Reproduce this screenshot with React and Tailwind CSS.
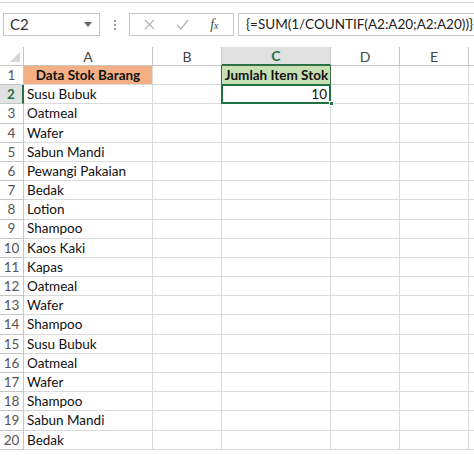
import React from 'react'

const items = [
  'Susu Bubuk', 'Oatmeal', 'Wafer', 'Sabun Mandi', 'Pewangi Pakaian', 'Bedak', 'Lotion',
  'Shampoo', 'Kaos Kaki', 'Kapas', 'Oatmeal', 'Wafer', 'Shampoo', 'Susu Bubuk',
  'Oatmeal', 'Wafer', 'Shampoo', 'Sabun Mandi', 'Bedak'
]

const font = { fontFamily: 'Lato, "Noto Sans", sans-serif' }

const Cell = ({ w, className = '', children }) => (
  <div className={`${w} shrink-0 h-full border-r border-b border-[#dadada] flex items-center whitespace-nowrap ${className}`}>
    {children}
  </div>
)

const RowHead = ({ n, active }) => (
  <div
    className={`w-[24px] shrink-0 h-full flex items-center justify-center text-[13.5px] border-b ${
      active
        ? 'bg-[#e1e1e1] text-[#217346] font-bold border-r-2 border-r-[#217346] border-b-[#c6c6c6]'
        : 'text-[#555] border-r border-[#c6c6c6]'
    }`}
  >
    {n}
  </div>
)

export default function App() {
  return (
    <div className="w-[474px] h-[455px] bg-white overflow-hidden text-[#111]" style={font}>
      {/* formula bar */}
      <div className="border-t border-[#d4d4d4] mt-[2px] h-[45px] flex items-start pt-[10px] pl-[3px]">
        <div className="w-[97px] shrink-0 h-[23px] border border-[#c6c6c6] flex items-center justify-between pl-[6px] pr-[7px] text-[15px] text-[#333]">
          <span>C2</span>
          <svg width="8" height="5" viewBox="0 0 8 5"><path d="M0 0h8L4 5z" fill="#666" /></svg>
        </div>
        <div className="w-[29px] shrink-0 h-[23px] flex flex-col items-center justify-center gap-[2px]">
          <span className="w-[2px] h-[2px] bg-[#999]" />
          <span className="w-[2px] h-[2px] bg-[#999]" />
          <span className="w-[2px] h-[2px] bg-[#999]" />
        </div>
        <div className="w-[105px] shrink-0 h-[23px] border border-[#c6c6c6] flex items-center justify-around px-[4px]">
          <svg width="11" height="11" viewBox="0 0 11 11"><path d="M1 1l9 9M10 1l-9 9" stroke="#b5b5b5" strokeWidth="1.3" /></svg>
          <svg width="13" height="11" viewBox="0 0 13 11"><path d="M1 6l4 4 7-9" stroke="#b5b5b5" strokeWidth="1.3" fill="none" /></svg>
          <span className="italic text-[14px] text-[#444]" style={{ fontFamily: '"Liberation Serif", serif' }}>f<span className="text-[10px]">x</span></span>
        </div>
        <div className="ml-[4px] flex-1 min-w-0 overflow-hidden h-[23px] border border-[#c6c6c6] border-r-0 flex items-center pl-[7px] text-[13.5px] text-[#222] whitespace-nowrap">
          {'{=SUM(1/COUNTIF(A2:A20;A2:A20))}'}
        </div>
      </div>

      {/* column headers */}
      <div className="flex h-[19px] text-[14px] text-[#444]">
        <div className="w-[24px] shrink-0 h-full border-r border-b border-[#c6c6c6] relative">
          <svg className="absolute right-[3px] bottom-[3px]" width="10" height="10" viewBox="0 0 10 10"><path d="M10 0v10H0z" fill="#d6d6d6" /></svg>
        </div>
        <div className="w-[129px] shrink-0 h-full border-r border-b border-[#c6c6c6] flex items-center justify-center">A</div>
        <div className="w-[69px] shrink-0 h-full border-r border-b border-[#c6c6c6] flex items-center justify-center">B</div>
        <div className="w-[109px] shrink-0 h-full bg-[#e1e1e1] border-r border-[#c6c6c6] border-b-2 border-b-[#217346] flex items-center justify-center font-bold text-[#217346]">C</div>
        <div className="w-[69px] shrink-0 h-full border-r border-b border-[#c6c6c6] flex items-center justify-center">D</div>
        <div className="w-[69px] shrink-0 h-full border-r border-b border-[#c6c6c6] flex items-center justify-center">E</div>
        <div className="flex-1 h-full border-b border-[#c6c6c6]" />
      </div>

      {/* row 1 */}
      <div className="flex h-[19.2px] text-[13.5px]">
        <RowHead n={1} />
        <Cell w="w-[129px]" className="bg-[#f4b084] justify-center font-bold">Data Stok Barang</Cell>
        <Cell w="w-[69px]" />
        <div className="w-[109px] shrink-0 h-full relative bg-[#c6e0b4] flex items-center justify-center font-bold whitespace-nowrap">
          <div className="absolute -left-px -top-px right-0 bottom-0 border border-[#3b6e45]" />
          <span className="relative">Jumlah Item Stok</span>
        </div>
        <Cell w="w-[69px]" />
        <Cell w="w-[69px]" />
        <div className="flex-1 h-full border-b border-[#dadada]" />
      </div>

      {items.map((name, i) => (
        <div key={i} className="flex h-[19.2px] text-[13.5px]">
          <RowHead n={i + 2} active={i === 0} />
          <Cell w="w-[129px]" className="pl-[3px]">{name}</Cell>
          <Cell w="w-[69px]" />
          {i === 0 ? (
            <div className="w-[109px] shrink-0 h-full relative flex items-center justify-end pr-[4px] border-b border-[#dadada]">
              <div className="absolute -left-px -top-px right-0 -bottom-px border-2 border-[#217346]" />
              <div className="absolute -right-[3px] -bottom-[3px] w-[5px] h-[5px] bg-[#217346] border border-white" />
              <span className="relative">10</span>
            </div>
          ) : (
            <Cell w="w-[109px]" />
          )}
          <Cell w="w-[69px]" />
          <Cell w="w-[69px]" />
          <div className="flex-1 h-full border-b border-[#dadada]" />
        </div>
      ))}
    </div>
  )
}
